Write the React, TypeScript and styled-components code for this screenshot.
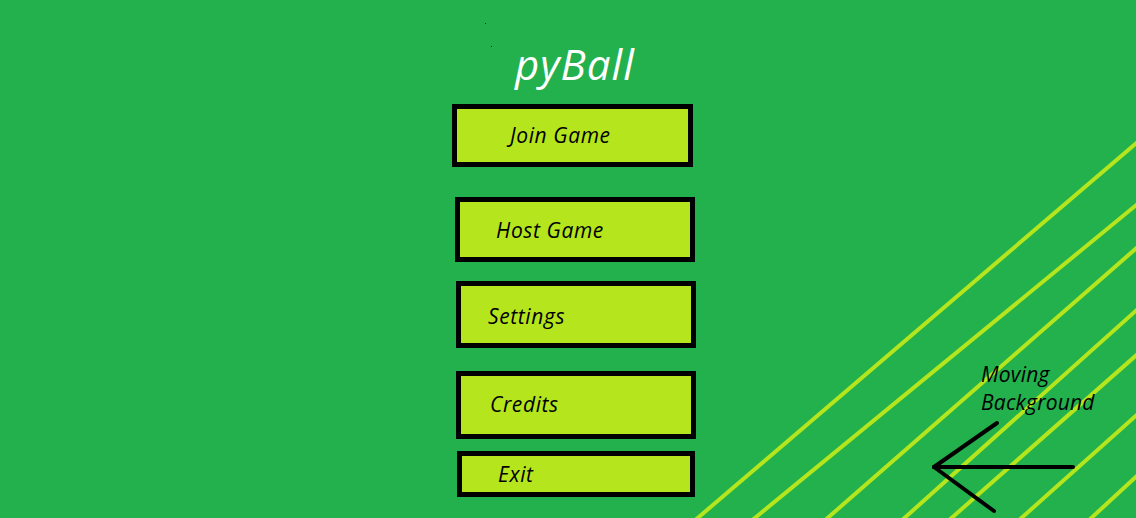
import React from "react";
import styled, { createGlobalStyle } from "styled-components";

const GlobalStyle = createGlobalStyle`
  html, body { margin: 0; padding: 0; }
  body { background: #22b14c; font-family: "Open Sans", "Noto Sans", sans-serif; }
`;

const Screen = styled.div`
  position: relative;
  width: 1136px;
  height: 518px;
  overflow: hidden;
  background: #22b14c;
`;

const Stripes = styled.svg`
  position: absolute;
  left: 0;
  top: 0;
  pointer-events: none;
`;

const Menu = styled.div`
  position: relative;
  display: flex;
  flex-direction: column;
  align-items: flex-start;
  margin-left: 452px;
  padding-top: 40px;
`;

const Title = styled.h1`
  margin: 0 0 16px 63px;
  font-family: "Open Sans", sans-serif;
  font-style: italic;
  font-weight: 400;
  font-size: 42px;
  line-height: 48px;
  letter-spacing: 1px;
  color: #ffffff;
`;

const MenuButton = styled.div<{ $dx: number; $w: number; $h: number; $gap: number; $pl: number; $pt: number }>`
  box-sizing: border-box;
  display: flex;
  align-items: flex-start;
  margin-left: ${(p) => p.$dx}px;
  margin-top: ${(p) => p.$gap}px;
  width: ${(p) => p.$w}px;
  height: ${(p) => p.$h}px;
  padding-left: ${(p) => p.$pl}px;
  padding-top: ${(p) => p.$pt}px;
  border: 5px solid #000000;
  background: #b5e61d;
  font-family: "Open Sans", sans-serif;
  font-style: italic;
  font-size: 21px;
  line-height: 27px;
  letter-spacing: 0.6px;
  color: #000000;
`;

const Note = styled.div`
  position: absolute;
  left: 981px;
  top: 360px;
  font-family: "Open Sans", sans-serif;
  font-style: italic;
  font-size: 21px;
  line-height: 28px;
  letter-spacing: 0.2px;
  color: #000000;
  white-space: nowrap;
`;

const Arrow = styled.svg`
  position: absolute;
  left: 0;
  top: 0;
  pointer-events: none;
`;

const Speck = styled.div<{ $x: number; $y: number }>`
  position: absolute;
  left: ${(p) => p.$x}px;
  top: ${(p) => p.$y}px;
  width: 1px;
  height: 1px;
  background: #0a3a18;
`;

const stripes: [number, number, number, number][] = [
  [693, 518, 1136, 140],
  [750, 518, 1136, 202],
  [823, 518, 1136, 245],
  [900, 518, 1136, 307],
  [947, 518, 1136, 352],
  [1017, 518, 1136, 412],
  [1087, 518, 1136, 473],
];

const buttons = [
  { label: "Join Game", dx: 0, w: 241, h: 63, gap: 0, pl: 53, pt: 13 },
  { label: "Host Game", dx: 3, w: 240, h: 65, gap: 30, pl: 36, pt: 15 },
  { label: "Settings", dx: 4, w: 240, h: 67, gap: 19, pl: 27, pt: 17 },
  { label: "Credits", dx: 4, w: 240, h: 68, gap: 23, pl: 29, pt: 15 },
  { label: "Exit", dx: 5, w: 238, h: 46, gap: 12, pl: 36, pt: 5 },
];

export default function App() {
  return (
    <>
      <GlobalStyle />
      <Screen>
        <Stripes width={1136} height={518} viewBox="0 0 1136 518">
          {stripes.map(([x1, y1, x2, y2], i) => (
            <line key={i} x1={x1} y1={y1 + 4} x2={x2 + 4} y2={y2} stroke="#b5e61d" strokeWidth={4} />
          ))}
        </Stripes>
        <Speck $x={485} $y={23} />
        <Speck $x={491} $y={46} />
        <Menu>
          <Title>pyBall</Title>
          {buttons.map((b) => (
            <MenuButton key={b.label} $dx={b.dx} $w={b.w} $h={b.h} $gap={b.gap} $pl={b.pl} $pt={b.pt}>
              {b.label}
            </MenuButton>
          ))}
        </Menu>
        <Note>
          Moving
          <br />
          Background
        </Note>
        <Arrow width={1136} height={518} viewBox="0 0 1136 518">
          <g stroke="#000000" strokeWidth={4} strokeLinecap="round" fill="none">
            <line x1={934} y1={467} x2={1073} y2={467} />
            <line x1={934} y1={467} x2={997} y2={423} />
            <line x1={934} y1={467} x2={994} y2={511} />
          </g>
        </Arrow>
      </Screen>
    </>
  );
}
